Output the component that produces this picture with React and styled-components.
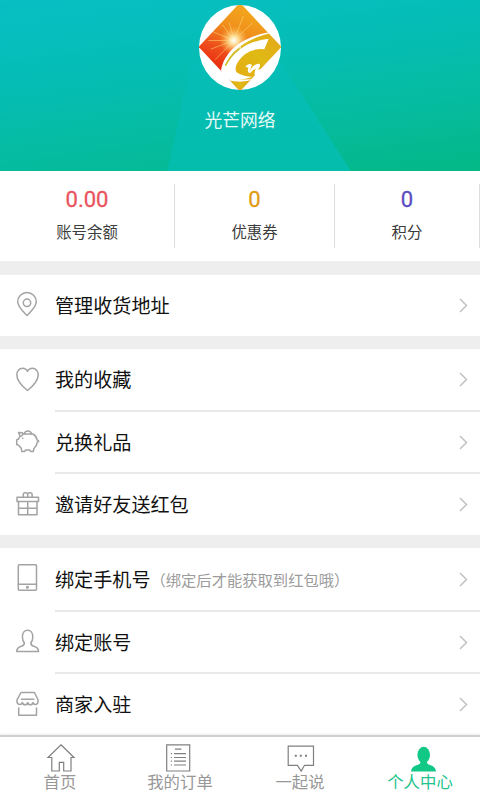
import React, { useState } from 'react';
import styled, { createGlobalStyle, ThemeProvider } from 'styled-components';

const theme = {
  colors: {
    background: '#eeeeee',
    surface: '#ffffff',
    text: '#111111',
    label: '#3c3c3c',
    muted: '#9c9c9c',
    line: '#e9e9e9',
    icon: '#a3a3a3',
    active: '#12c887',
  },
};

const GlobalStyle = createGlobalStyle`
  * { box-sizing: border-box; }

  body {
    margin: 0;
    font-family: 'Noto Sans CJK SC', 'Noto Sans', sans-serif;
    background: #eeeeee;
  }
`;

const Page = styled.div`
  width: 480px;
  height: 800px;
  display: flex;
  flex-direction: column;
  overflow: hidden;
  background: ${props => props.theme.colors.background};
`;

const Header = styled.header`
  position: relative;
  height: 171px;
  flex-shrink: 0;
  padding-top: 5px;
  display: flex;
  flex-direction: column;
  align-items: center;
  background: linear-gradient(172deg, #07bfc4 0%, #05bdb4 38%, #05bb9d 72%, #04b886 100%);
`;

const Beam = styled.div`
  position: absolute;
  inset: 0;
  background: linear-gradient(180deg, #06bdb9 30%, #04bdab 100%);
  clip-path: polygon(192px 60px, 279px 60px, 351px 171px, 167px 171px);
`;

const Avatar = styled.svg`
  position: relative;
  display: block;
  width: 82px;
  height: 85px;
`;

const UserName = styled.div`
  position: relative;
  margin-top: 16px;
  font-size: 17.8px;
  line-height: 26px;
  color: #e6faf7;
`;

const Stats = styled.section`
  height: 90px;
  flex-shrink: 0;
  padding-top: 13px;
  display: grid;
  grid-template-columns: 175px 160px 145px;
  align-items: start;
  background: ${props => props.theme.colors.surface};
`;

const Stat = styled.div`
  height: 64px;
  display: flex;
  flex-direction: column;
  align-items: center;
  border-right: 1px solid #dedede;
`;

const StatValue = styled.div`
  margin-top: 3px;
  font-family: Roboto, sans-serif;
  font-size: 22px;
  line-height: 26px;
  -webkit-text-stroke: 0.3px ${props => props.$color};
  color: ${props => props.$color};
`;

const StatLabel = styled.div`
  margin-top: 7px;
  font-size: 15.4px;
  line-height: 22px;
  color: ${props => props.theme.colors.label};
`;

const Group = styled.section`
  margin-top: ${props => props.$gap}px;
  flex-shrink: 0;
  background: ${props => props.theme.colors.surface};
`;

const Row = styled.div`
  height: ${props => props.$height}px;
  padding-left: 14px;
  display: flex;
  align-items: center;
  cursor: pointer;
`;

const RowIcon = styled.svg`
  width: 28px;
  height: 28px;
  margin-right: 13px;
  flex-shrink: 0;
  overflow: visible;
  fill: none;
  stroke: ${props => props.theme.colors.icon};
  stroke-width: 1.5;
  stroke-linecap: round;
  stroke-linejoin: round;
`;

const RowBody = styled.div`
  flex: 1;
  height: 100%;
  padding-right: 12px;
  display: flex;
  align-items: center;
  border-bottom: ${props => (props.$last ? 'none' : `2px solid ${props.theme.colors.line}`)};
`;

const RowTitle = styled.span`
  padding-bottom: 1px;
  font-size: 19.1px;
  line-height: 28px;
  white-space: nowrap;
  color: ${props => props.theme.colors.text};
`;

const RowNote = styled.span`
  font-size: 15.3px;
  white-space: nowrap;
  color: ${props => props.theme.colors.muted};
`;

const Chevron = styled.svg`
  width: 9px;
  height: 15px;
  margin-left: auto;
  fill: none;
  stroke: #c4c4c4;
  stroke-width: 1.6;
`;

const TabBar = styled.nav`
  position: relative;
  height: 65px;
  flex-shrink: 0;
  display: grid;
  grid-template-columns: repeat(4, 120px);
  border-top: 2px solid #cfcfcf;
  box-shadow: 0 -1px 2px rgba(0, 0, 0, 0.08);
  background: ${props => props.theme.colors.surface};
`;

const Tab = styled.button`
  padding: 6px 0 0;
  border: none;
  background: none;
  font-family: inherit;
  display: flex;
  flex-direction: column;
  align-items: center;
  cursor: pointer;
  color: ${props => (props.$active ? props.theme.colors.active : '#808080')};
`;

const TabIcon = styled.svg`
  width: 32px;
  height: 29px;
  flex-shrink: 0;
  overflow: visible;
  fill: none;
  stroke: currentColor;
  stroke-width: 1.2;
`;

const TabLabel = styled.span`
  margin-top: -2px;
  font-size: 16.4px;
  line-height: 22px;
  color: ${props => (props.$active ? '#22c48d' : '#989898')};
`;

const icons = {
  pin: (
    <>
      <path d="M13 23.5C9.5 20 3.700 15 3.700 9.800a9.300 9.300 0 0 1 18.600 0C22.300 15 16.500 20 13 23.500Z" />
      <circle cx="13" cy="10.800" r="3.700" />
    </>
  ),
  heart: <path d="M13.500 23.500C9.500 20.300 2.800 14 2.800 7.800c0-3.600 2.400-6.500 5.600-6.500 2.300 0 4.200 1 5.100 3.200.9-2.200 2.800-3.200 5.100-3.200 3.200 0 5.600 2.900 5.600 6.500C24.200 14 17.500 20.300 13.500 23.500Z" />,
  pig: (
    <>
      <path d="M9.500 5H19c2.300 1.400 3.800 3.700 4.200 6.200l1.600 1-1.600 1.200c-.3 2.600-1.500 4.700-3.300 6.100l-.6 3h-2.800l-.7-1.500h-4.400l-.7 1.500H7.900l-.7-3.300c-1-.8-1.800-1.700-2.300-2.800l-2.200-.9v-4.600l1.900-.9c.4-1 .9-1.900 1.600-2.700L4.500 3.500l3.800.3.900 1.200-1.900 2.200" />
      <path d="M10.200 4.900a3.700 3.600 0 0 1 7.300 0M8.800 9.300v.3" />
    </>
  ),
  gift: (
    <>
      <path d="M3 6.200h21.500v4.300H3zM4.500 10.500H23v13.300H4.500zM13.700 10.500v13.300M4.500 17.200H23" />
      <path d="M9.300 6.200V3.500q0-1.800 1.800-1.800h.8q1.800 0 1.800 1.800v2.700-2.700q0-1.800 1.800-1.800h.8q1.800 0 1.800 1.800v2.700" />
    </>
  ),
  phone: (
    <>
      <rect x="4.300" y="-1.200" width="18.200" height="25.500" rx="1" />
      <path d="M4.300 18.300h18.200" />
      <circle cx="13.400" cy="21.300" r=".8" fill="#a3a3a3" />
    </>
  ),
  person: (
    <>
      <path d="M10.300 13.700C8.900 12.300 8.400 10 8.400 7.800c0-3.900 2.200-6.600 5.200-6.600s5.200 2.700 5.200 6.600c0 2.200-.5 4.500-1.900 5.900" />
      <path d="M10.300 13.700c.2 2.200-.3 2.700-2.300 3.300-3.500 1-5.200 2.200-5.300 5.400h21.900c-.1-3.200-1.900-4.400-5.400-5.400-2-.6-2.500-1.100-2.300-3.300" />
    </>
  ),
  shop: (
    <>
      <path d="M7 1.500h13.500l3.500 7.300v2c0 3.200-4.300 3.600-5 .7-.8 3.100-4.600 3.100-5.300 0-.8 3.100-4.600 3.100-5.300 0C7.600 14.400 3 14 3 10.800v-2Z" />
      <path d="M7.500 8.300h12.300M4.700 17v7.200h17.800V17" />
    </>
  ),
};

const tabIcons = {
  home: <path d="M17 1.800 30 14.500h-3V28h-7.300v-8.600h-4.400V28H7.800V14.500H4Z" />,
  order: (
    <>
      <path d="M2.700 1.800h23V28h-23zM11 6.200h6.500M10 10.700h12M10 14.500h12M10 18.200h12M10 22h12" />
      <path d="M6.800 10.700h1.200M6.800 14.500h1.200M6.800 18.200h1.200M6.800 22h1.200" />
    </>
  ),
  chat: (
    <>
      <path d="M4.200 3.200h25.300V22.300h-9L17.200 28l-3.800-5.700H4.200Z" />
      <path d="M10.800 12.700h2M15.800 12.700h2M21 12.700h2" strokeWidth="2" />
    </>
  ),
  user: (
    <g fill="currentColor" stroke="none">
      <ellipse cx="19.700" cy="12" rx="6.300" ry="8.300" />
      <path d="M16.500 17.500h6.400c0 3 .6 3.800 3.200 4.600 3.700 1.100 5.700 3.300 5.900 6.500H7c.2-3.200 2.200-5.400 6.200-6.500 2.600-.8 3.300-1.600 3.300-4.600Z" />
    </g>
  ),
};

const stats = [
  { value: '0.00', label: '账号余额', color: '#e9535d' },
  { value: '0', label: '优惠券', color: '#e19a13' },
  { value: '0', label: '积分', color: '#5b4dc0' },
];

const groups = [
  { gap: 14, rows: [{ icon: 'pin', title: '管理收货地址', height: 61 }] },
  {
    gap: 13,
    rows: [
      { icon: 'heart', title: '我的收藏', height: 63 },
      { icon: 'pig', title: '兑换礼品', height: 62 },
      { icon: 'gift', title: '邀请好友送红包', height: 61 },
    ],
  },
  {
    gap: 13,
    rows: [
      { icon: 'phone', title: '绑定手机号', note: '（绑定后才能获取到红包哦）', height: 64 },
      { icon: 'person', title: '绑定账号', height: 62 },
      { icon: 'shop', title: '商家入驻', height: 61 },
    ],
  },
];

const tabs = [
  { id: 'home', label: '首页' },
  { id: 'order', label: '我的订单' },
  { id: 'chat', label: '一起说' },
  { id: 'user', label: '个人中心' },
];

function Logo() {
  return (
    <Avatar viewBox="57 15 246 256" preserveAspectRatio="none">
      <defs>
        <clipPath id="round"><ellipse cx="180" cy="143" rx="123" ry="128" /></clipPath>
        <clipPath id="diamond"><path d="M180 8 304 141 180 274 56 141Z" /></clipPath>
        <linearGradient id="fire" x1=".7" y1="0" x2=".3" y2="1">
          <stop offset="0" stopColor="#f5b31c" />
          <stop offset=".35" stopColor="#f0901c" />
          <stop offset=".6" stopColor="#ee4f1c" />
          <stop offset=".8" stopColor="#ea2a10" />
        </linearGradient>
        <linearGradient id="gold" x1="1" y1="0" x2="0" y2="1">
          <stop offset="0" stopColor="#e5a51b" />
          <stop offset=".4" stopColor="#dfb914" />
          <stop offset="1" stopColor="#e8a512" />
        </linearGradient>
        <radialGradient id="glow">
          <stop offset="0" stopColor="#fff" />
          <stop offset=".3" stopColor="#fff0b0" stopOpacity=".85" />
          <stop offset="1" stopColor="#ffc040" stopOpacity="0" />
        </radialGradient>
      </defs>
      <g clipPath="url(#round)">
        <path d="M50 10h260v270H50z" fill="#fff" />
        <g clipPath="url(#diamond)">
          <path d="M50 0h260v280H50z" fill="url(#fire)" />
          <g stroke="#ffdf86" strokeWidth="3" opacity=".5">
            <path d="M162 122 190 48M162 122 148 68M162 122 98 95M162 122 85 122M162 122 92 148M162 122 105 180M162 122 128 75M162 122 218 68" />
          </g>
          <circle cx="162" cy="122" r="44" fill="url(#glow)" />
          <path d="M122 222C127 158 186 101 310 91V280H110Z" fill="#fff" />
          <path d="M132 214C139 166 187 120 268 101L310 135 216 242Q180 251 140 241L180 280 225 236Q180 245 148 229Z" fill="url(#gold)" />
          <path d="M140 244Q182 252 216 241L180 278Z" fill="url(#gold)" />
        </g>
        <path d="M266 117 253 148Q218 145 195 163C172 181 158 210 173 220Q190 230 218 232Q185 243 153 237Q132 248 125 222C140 175 171 150 183 139L181 148Q211 123 266 117Z" fill="#fff" />
        <path d="M136 198Q151 167 179 146" fill="none" stroke="#cfc02a" strokeWidth="5" />
        <path d="M196 201Q207 187 216 196L208 215Q223 190 238 192Q244 196 234 211Q244 206 254 203L232 230Q218 232 227 207Q218 209 211 220Q200 220 205 204Z" fill="#fff" />
      </g>
    </Avatar>
  );
}

function MenuRow({ row, last }) {
  return (
    <Row $height={row.height}>
      <RowIcon viewBox="0 0 28 28">{icons[row.icon]}</RowIcon>
      <RowBody $last={last}>
        <RowTitle>{row.title}</RowTitle>
        {row.note && <RowNote>{row.note}</RowNote>}
        <Chevron viewBox="0 0 9 15">
          <path d="M1 1 7.500 7.500 1 14" />
        </Chevron>
      </RowBody>
    </Row>
  );
}

function App() {
  const [activeTab, setActiveTab] = useState('user');

  return (
    <ThemeProvider theme={theme}>
      <GlobalStyle />
      <Page>
        <Header>
          <Beam />
          <Logo />
          <UserName>光芒网络</UserName>
        </Header>
        <Stats>
          {stats.map(stat => (
            <Stat key={stat.label}>
              <StatValue $color={stat.color}>{stat.value}</StatValue>
              <StatLabel>{stat.label}</StatLabel>
            </Stat>
          ))}
        </Stats>
        {groups.map(group => (
          <Group key={group.rows[0].icon} $gap={group.gap}>
            {group.rows.map((row, i) => (
              <MenuRow key={row.icon} row={row} last={i === group.rows.length - 1} />
            ))}
          </Group>
        ))}
        <TabBar>
          {tabs.map(tab => (
            <Tab key={tab.id} $active={tab.id === activeTab} onClick={() => setActiveTab(tab.id)}>
              <TabIcon viewBox="0 0 32 29">{tabIcons[tab.id]}</TabIcon>
              <TabLabel $active={tab.id === activeTab}>{tab.label}</TabLabel>
            </Tab>
          ))}
        </TabBar>
      </Page>
    </ThemeProvider>
  );
}

export default App;
